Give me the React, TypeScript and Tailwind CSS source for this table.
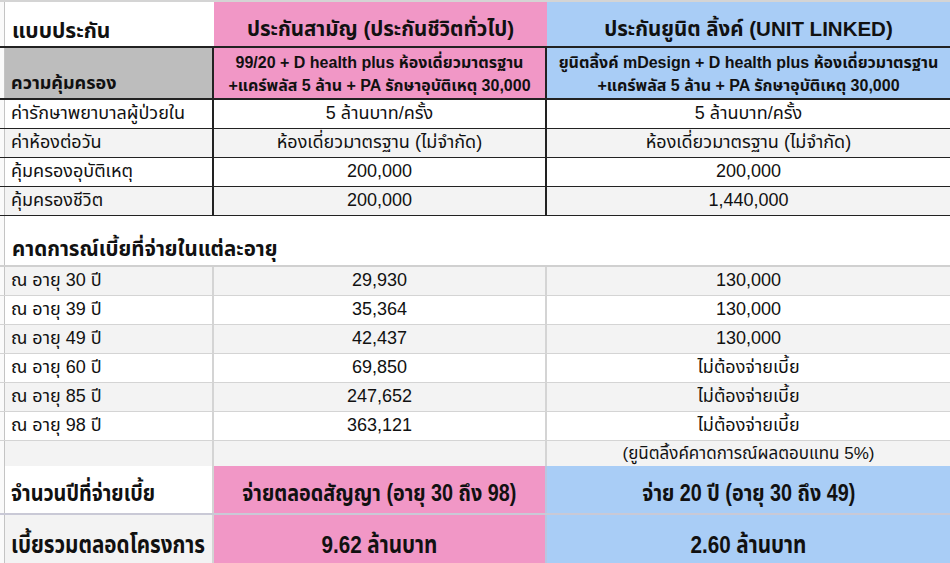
import React from 'react';

// column layout: gutter | label | ordinary plan | unit linked plan
const COLS = 'grid grid-cols-[5px_209px_333px_1fr]';

const PINK = 'bg-[#f197c6]';
const BLUE = 'bg-[#a9cdf6]';
const SHADE = 'bg-[#f3f3f3]';

interface RowProps {
  height: string;
  bottom: string;
  children: React.ReactNode;
}

function Row({ height, bottom, children }: RowProps) {
  return (
    <div className={`${COLS} ${height} ${bottom}`}>
      <div className="border-r border-[#c4c4c4] bg-[#fafafa]" />
      {children}
    </div>
  );
}

// condensed bold text used in the summary rows
function Tall({ children, left }: { children: React.ReactNode; left?: boolean }) {
  return (
    <span className={`inline-block whitespace-nowrap scale-x-[0.86] ${left ? 'origin-left' : 'origin-center'}`}>
      {children}
    </span>
  );
}

// coverage rows (black grid)
const coverage = [
  { label: 'ค่ารักษาพยาบาลผู้ป่วยใน', a: '5 ล้านบาท/ครั้ง', b: '5 ล้านบาท/ครั้ง' },
  { label: 'ค่าห้องต่อวัน', a: 'ห้องเดี่ยวมาตรฐาน (ไม่จำกัด)', b: 'ห้องเดี่ยวมาตรฐาน (ไม่จำกัด)' },
  { label: 'คุ้มครองอุบัติเหตุ', a: '200,000', b: '200,000' },
  { label: 'คุ้มครองชีวิต', a: '200,000', b: '1,440,000' },
];

// premium estimate by age (light grid)
const premiums = [
  { age: 30, a: '29,930', b: '130,000' },
  { age: 39, a: '35,364', b: '130,000' },
  { age: 49, a: '42,437', b: '130,000' },
  { age: 60, a: '69,850', b: 'ไม่ต้องจ่ายเบี้ย' },
  { age: 85, a: '247,652', b: 'ไม่ต้องจ่ายเบี้ย' },
  { age: 98, a: '363,121', b: 'ไม่ต้องจ่ายเบี้ย' },
];

export default function App() {
  return (
    <div className="w-[950px] h-[563px] overflow-hidden bg-white text-[#111] font-['Liberation_Sans','Noto_Sans_Thai','Noto_Sans',sans-serif]">
      <div className="h-[2px] bg-[#d4d4d4]" />

      {/* plan names */}
      <Row height="h-[46px]" bottom="border-b-2 border-[#222]">
        <div className="flex items-end pl-[7px] pb-0 text-[21px] font-bold">แบบประกัน</div>
        <div className={`${PINK} flex items-end justify-center pb-[1px] text-[20.5px] font-bold`}>
          ประกันสามัญ (ประกันชีวิตทั่วไป)
        </div>
        <div className={`${BLUE} flex items-end justify-center pb-[1px] text-[20.5px] font-bold`}>
          ประกันยูนิต ลิ้งค์ (UNIT LINKED)
        </div>
      </Row>

      {/* plan details */}
      <Row height="h-[52px]" bottom="border-b-2 border-[#222]">
        <div className="bg-[#bdbdbd] border-r-2 border-[#222] flex items-end pl-[6px] pb-[1px] text-[18px] font-bold">
          ความคุ้มครอง
        </div>
        <div className={`${PINK} border-r-2 border-[#222] flex flex-col items-center justify-center pt-[2px] text-[16px] font-bold leading-[23px] whitespace-nowrap`}>
          <span>99/20 + D health plus ห้องเดี่ยวมาตรฐาน</span>
          <span>+แคร์พลัส 5 ล้าน + PA รักษาอุบัติเหตุ 30,000</span>
        </div>
        <div className={`${BLUE} flex flex-col items-center justify-center pt-[2px] text-[16px] font-bold leading-[23px] whitespace-nowrap`}>
          <span>ยูนิตลิ้งค์ mDesign + D health plus ห้องเดี่ยวมาตรฐาน</span>
          <span>+แคร์พลัส 5 ล้าน + PA รักษาอุบัติเหตุ 30,000</span>
        </div>
      </Row>

      {coverage.map((r, i) => (
        <Row key={r.label} height="h-[29px]" bottom="border-b-2 border-[#222]">
          <div className={`${i % 2 ? SHADE : 'bg-white'} border-r-2 border-[#222] flex items-end pb-[1px] pl-[6px] text-[18px]`}>
            {r.label}
          </div>
          <div className={`${i % 2 ? SHADE : 'bg-white'} border-r-2 border-[#222] flex items-end pb-[1px] justify-center text-[18px]`}>
            {r.a}
          </div>
          <div className={`${i % 2 ? SHADE : 'bg-white'} flex items-end pb-[1px] justify-center text-[18px]`}>
            {r.b}
          </div>
        </Row>
      ))}

      {/* section heading */}
      <Row height="h-[51px]" bottom="border-b-2 border-[#d0d0d0]">
        <div className="col-span-3 flex items-end pl-[7px] pb-0 text-[20.5px] font-bold">
          คาดการณ์เบี้ยที่จ่ายในแต่ละอายุ
        </div>
      </Row>

      {premiums.map((r, i) => (
        <Row key={r.age} height="h-[29px]" bottom="border-b-2 border-[#d4d4d4]">
          <div className={`${i % 2 ? 'bg-white' : SHADE} border-r-2 border-[#d4d4d4] flex items-end pb-[1px] pl-[6px] text-[18px]`}>
            ณ อายุ {r.age} ปี
          </div>
          <div className={`${i % 2 ? 'bg-white' : SHADE} border-r-2 border-[#d4d4d4] flex items-end pb-[1px] justify-center text-[18px]`}>
            {r.a}
          </div>
          <div className={`${i % 2 ? 'bg-white' : SHADE} flex items-end pb-[1px] justify-center text-[18px]`}>
            {r.b}
          </div>
        </Row>
      ))}

      <Row height="h-[25px]" bottom="border-b-2 border-[#d4d4d4]">
        <div className={`${SHADE} border-r-2 border-[#d4d4d4]`} />
        <div className={`${SHADE} border-r-2 border-[#d4d4d4]`} />
        <div className={`${SHADE} flex items-center justify-center text-[17px]`}>
          (ยูนิตลิ้งค์คาดการณ์ผลตอบแทน 5%)
        </div>
      </Row>

      {/* summary */}
      <Row height="h-[49px]" bottom="border-b-2 border-[#c9c9d6]">
        <div className="bg-white border-r-2 border-[#d4d4d4] flex items-end pl-[6px] pb-[3px] text-[23px] font-bold">
          <Tall left>จำนวนปีที่จ่ายเบี้ย</Tall>
        </div>
        <div className={`${PINK} border-r-2 border-[#b8c6e0] flex items-end justify-center pb-[3px] text-[23px] font-bold`}>
          <Tall>จ่ายตลอดสัญญา (อายุ 30 ถึง 98)</Tall>
        </div>
        <div className={`${BLUE} flex items-end justify-center pb-[3px] text-[23px] font-bold`}>
          <Tall>จ่าย 20 ปี (อายุ 30 ถึง 49)</Tall>
        </div>
      </Row>

      <Row height="h-[48px]" bottom="">
        <div className={`${SHADE} border-r-2 border-[#d4d4d4] flex items-end pl-[6px] pb-0 text-[24px] font-bold`}>
          <Tall left>เบี้ยรวมตลอดโครงการ</Tall>
        </div>
        <div className={`${PINK} border-r-2 border-[#b8c6e0] flex items-end justify-center pb-0 text-[24px] font-bold`}>
          <Tall>9.62 ล้านบาท</Tall>
        </div>
        <div className={`${BLUE} flex items-end justify-center pb-0 text-[24px] font-bold`}>
          <Tall>2.60 ล้านบาท</Tall>
        </div>
      </Row>
    </div>
  );
}
